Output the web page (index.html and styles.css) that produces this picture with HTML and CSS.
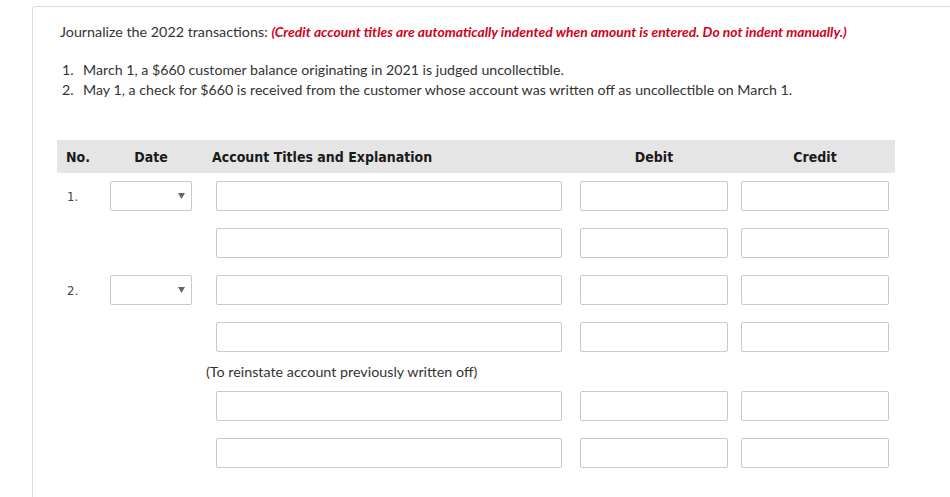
FILE: index.html
```html
<!DOCTYPE html>
<html lang="en">
<head>
<meta charset="utf-8">
<title>Journal entries</title>
<link rel="stylesheet" href="styles.css">
</head>
<body>
<div class="card">
  <p class="prompt">Journalize the 2022 transactions: <em class="warn">(Credit account titles are automatically indented when amount is entered. Do not indent manually.)</em></p>
  <ol class="items">
    <li><span class="num">1.</span><span>March 1, a $660 customer balance originating in 2021 is judged uncollectible.</span></li>
    <li><span class="num">2.</span><span>May 1, a check for $660 is received from the customer whose account was written off as uncollectible on March 1.</span></li>
  </ol>

  <div class="journal">
    <div class="jhead">
      <div class="h-no">No.</div>
      <div class="h-date">Date</div>
      <div class="h-acct">Account Titles and Explanation</div>
      <div class="h-debit">Debit</div>
      <div class="h-credit">Credit</div>
    </div>

    <div class="jrow">
      <div class="c-no">1.</div>
      <div class="c-date"><div class="select"><svg class="caret" width="7" height="6" viewBox="0 0 7 6"><path d="M0 0H7L3.5 6Z" fill="#666"/></svg></div></div>
      <div class="c-acct"><div class="field acct"></div></div>
      <div class="c-debit"><div class="field amt"></div></div>
      <div class="c-credit"><div class="field amt"></div></div>
    </div>
    <div class="jrow">
      <div class="c-no"></div>
      <div class="c-date"></div>
      <div class="c-acct"><div class="field acct"></div></div>
      <div class="c-debit"><div class="field amt"></div></div>
      <div class="c-credit"><div class="field amt"></div></div>
    </div>

    <div class="jrow">
      <div class="c-no">2.</div>
      <div class="c-date"><div class="select"><svg class="caret" width="7" height="6" viewBox="0 0 7 6"><path d="M0 0H7L3.5 6Z" fill="#666"/></svg></div></div>
      <div class="c-acct"><div class="field acct"></div></div>
      <div class="c-debit"><div class="field amt"></div></div>
      <div class="c-credit"><div class="field amt"></div></div>
    </div>
    <div class="jrow">
      <div class="c-no"></div>
      <div class="c-date"></div>
      <div class="c-acct"><div class="field acct"></div></div>
      <div class="c-debit"><div class="field amt"></div></div>
      <div class="c-credit"><div class="field amt"></div></div>
    </div>

    <div class="jnote">(To reinstate account previously written off)</div>

    <div class="jrow after-note">
      <div class="c-no"></div>
      <div class="c-date"></div>
      <div class="c-acct"><div class="field acct"></div></div>
      <div class="c-debit"><div class="field amt"></div></div>
      <div class="c-credit"><div class="field amt"></div></div>
    </div>
    <div class="jrow">
      <div class="c-no"></div>
      <div class="c-date"></div>
      <div class="c-acct"><div class="field acct"></div></div>
      <div class="c-debit"><div class="field amt"></div></div>
      <div class="c-credit"><div class="field amt"></div></div>
    </div>
  </div>
</div>
</body>
</html>
```

FILE: styles.css
```css
html, body {
  margin: 0;
  padding: 0;
  background: #ffffff;
  overflow: hidden;
}

body {
  font-family: Lato, "Liberation Sans", sans-serif;
  font-size: 14.3px;
  color: #333333;
}

.card {
  margin: 6px 0 0 32px;
  width: 960px;
  min-height: 560px;
  border: 1px solid #dddddd;
  border-radius: 3px;
  padding: 16px 0 0 27px;
  box-sizing: border-box;
}

.prompt {
  margin: 0;
  line-height: 18px;
}

.warn {
  color: #d0021b;
  font-weight: bold;
  font-style: italic;
  font-size: 13.9px;
}

.items {
  list-style: none;
  margin: 19px 0 0 0;
  padding: 0 0 0 2px;
  line-height: 20px;
  font-size: 14.2px;
}

.items li {
  display: flex;
}

.num {
  width: 21px;
  flex: none;
}

.journal {
  margin: 40px 0 0 -3px;
  width: 838px;
}

.jhead,
.jrow {
  display: grid;
  grid-template-columns: 53px 82px 370px 166px 161px 6px;
  align-items: center;
}

.jhead {
  height: 33px;
  background: #e5e5e5;
  font-family: "DejaVu Sans Condensed", "DejaVu Sans", sans-serif;
  font-weight: bold;
  font-size: 14px;
  color: #1a1a1a;
}

.h-no { padding-left: 9px; }
.h-date { text-align: center; }
.h-acct { padding-left: 20px; }
.h-debit { padding-left: 18px; text-align: center; }
.h-credit { padding-left: 13px; text-align: center; }

.jrow {
  height: 30px;
  margin-top: 17px;
}

.jhead + .jrow {
  margin-top: 8px;
}

.jrow.after-note {
  margin-top: 10px;
}

.c-no {
  padding-left: 10px;
  font-family: "DejaVu Sans Condensed", "DejaVu Sans", sans-serif;
  font-size: 13px;
  color: #444444;
}

.c-acct,
.c-debit,
.c-credit {
  display: flex;
  justify-content: flex-end;
}

.select,
.field {
  height: 30px;
  box-sizing: border-box;
  border: 1px solid #c9c9c9;
  border-radius: 2px;
  background: #ffffff;
}

.select {
  width: 82px;
  display: flex;
  align-items: center;
  justify-content: flex-end;
  padding-right: 6px;
}

.field.acct {
  width: 346px;
}

.field.amt {
  width: 148px;
}

.jnote {
  margin-top: 11px;
  padding-left: 149px;
  line-height: 18px;
  color: #333333;
}
```
